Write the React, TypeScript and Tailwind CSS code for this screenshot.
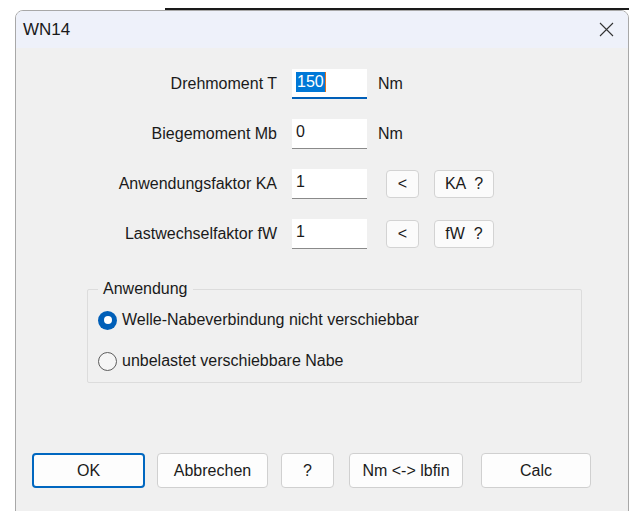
import { useState } from "react";

const ui = "font-['Liberation_Sans',Arial,sans-serif]";

function Field({ value, focused }: { value: string; focused?: boolean }) {
  return (
    <div
      className={
        "flex h-[30px] w-[75px] items-center bg-white pb-[3px] pl-[4px] " +
        (focused ? "border-b-2 border-[#005fb8]" : "border-b border-[#8a8a8a]")
      }
    >
      {focused ? (
        <span className="flex items-center">
          <span className="bg-[#0078d7] px-[1px] leading-[20px] text-white">{value}</span>
          <span className="h-[20px] w-[1px] bg-[#e07020]" />
        </span>
      ) : (
        <span>{value}</span>
      )}
    </div>
  );
}

function SmallButton({ label, width }: { label: string; width: string }) {
  return (
    <button
      type="button"
      className={
        width +
        " h-[28px] whitespace-pre rounded-[4px] border border-[#d3d3d3] bg-[#fbfbfb] text-center leading-none text-[#1a1a1a]"
      }
    >
      {label}
    </button>
  );
}

function Row({ label, children }: { label: string; children: React.ReactNode }) {
  return (
    <div className="flex h-[30px] items-center">
      <div className="w-[261px] text-right">{label}</div>
      <div className="ml-[15px] flex items-center">{children}</div>
    </div>
  );
}

function Radio({ checked, label }: { checked?: boolean; label: string }) {
  return (
    <div className="flex h-[20px] items-center">
      {checked ? (
        <span className="flex h-[19px] w-[19px] items-center justify-center rounded-full bg-[#005fb8]">
          <span className="h-[8px] w-[8px] rounded-full bg-white" />
        </span>
      ) : (
        <span className="h-[19px] w-[19px] rounded-full border-[1.5px] border-[#5d5d5d] bg-[#f5f5f5]" />
      )}
      <span className="ml-[5px]">{label}</span>
    </div>
  );
}

function DialogButton({ label, width, primary }: { label: string; width: string; primary?: boolean }) {
  return (
    <button
      type="button"
      className={
        width +
        " h-[35px] rounded-[4px] bg-[#fdfdfd] text-center text-[#1a1a1a] " +
        (primary ? "border-2 border-[#0067c0]" : "border border-[#d0d0d0]")
      }
    >
      {label}
    </button>
  );
}

export default function App() {
  const [mode] = useState(0);

  return (
    <div className="relative h-[511px] w-[637px] overflow-hidden bg-white">
      {/* edge of the window behind */}
      <div className="absolute left-[165px] right-[8px] top-[8px] h-[2px] bg-[#1a1a1a]" />

      <div className="absolute left-[15px] top-[10px] h-[520px] w-[614px] overflow-hidden rounded-t-[8px] border border-[#a8a8a8]">
        <div className="flex h-[37px] items-center justify-between bg-[#eef1fa] pl-[7px] pr-[14px]">
          <span className={ui + " text-[17px] text-[#1a1a1a]"}>WN14</span>
          <svg width="15" height="15" viewBox="0 0 15 15" className="text-[#333]">
            <path d="M1 1 L14 14 M14 1 L1 14" stroke="currentColor" strokeWidth="1.1" />
          </svg>
        </div>

        <div className={"h-full bg-[#f0f0f0] text-[16px] text-[#1a1a1a] " + ui}>
          <div className="flex flex-col gap-[20px] pt-[21px]">
            <Row label="Drehmoment T">
              <Field value="150" focused />
              <span className="ml-[11px]">Nm</span>
            </Row>
            <Row label="Biegemoment Mb">
              <Field value="0" />
              <span className="ml-[11px]">Nm</span>
            </Row>
            <Row label="Anwendungsfaktor KA">
              <Field value="1" />
              <div className="ml-[19px] flex gap-[15px]">
                <SmallButton label="<" width="w-[33px]" />
                <SmallButton label="KA  ?" width="w-[60px]" />
              </div>
            </Row>
            <Row label="Lastwechselfaktor fW">
              <Field value="1" />
              <div className="ml-[19px] flex gap-[15px]">
                <SmallButton label="<" width="w-[33px]" />
                <SmallButton label="fW  ?" width="w-[60px]" />
              </div>
            </Row>
          </div>

          <div className="relative ml-[71px] mt-[40px] h-[94px] w-[495px] rounded-[2px] border border-[#dcdcdc] pl-[10px] pt-[20px]">
            <span className="absolute left-[10px] top-[-11px] bg-[#f0f0f0] px-[5px] leading-[20px]">Anwendung</span>
            <div className="flex flex-col gap-[21px]">
              <Radio checked={mode === 0} label="Welle-Nabeverbindung nicht verschiebbar" />
              <Radio checked={mode === 1} label="unbelastet verschiebbare Nabe" />
            </div>
          </div>

          <div className="ml-[16px] mt-[70px] flex">
            <DialogButton label="OK" width="w-[113px]" primary />
            <div className="ml-[12px]"><DialogButton label="Abbrechen" width="w-[111px]" /></div>
            <div className="ml-[13px]"><DialogButton label="?" width="w-[53px]" /></div>
            <div className="ml-[15px]"><DialogButton label="Nm <-> lbfin" width="w-[114px]" /></div>
            <div className="ml-[18px]"><DialogButton label="Calc" width="w-[110px]" /></div>
          </div>
        </div>
      </div>
    </div>
  );
}
